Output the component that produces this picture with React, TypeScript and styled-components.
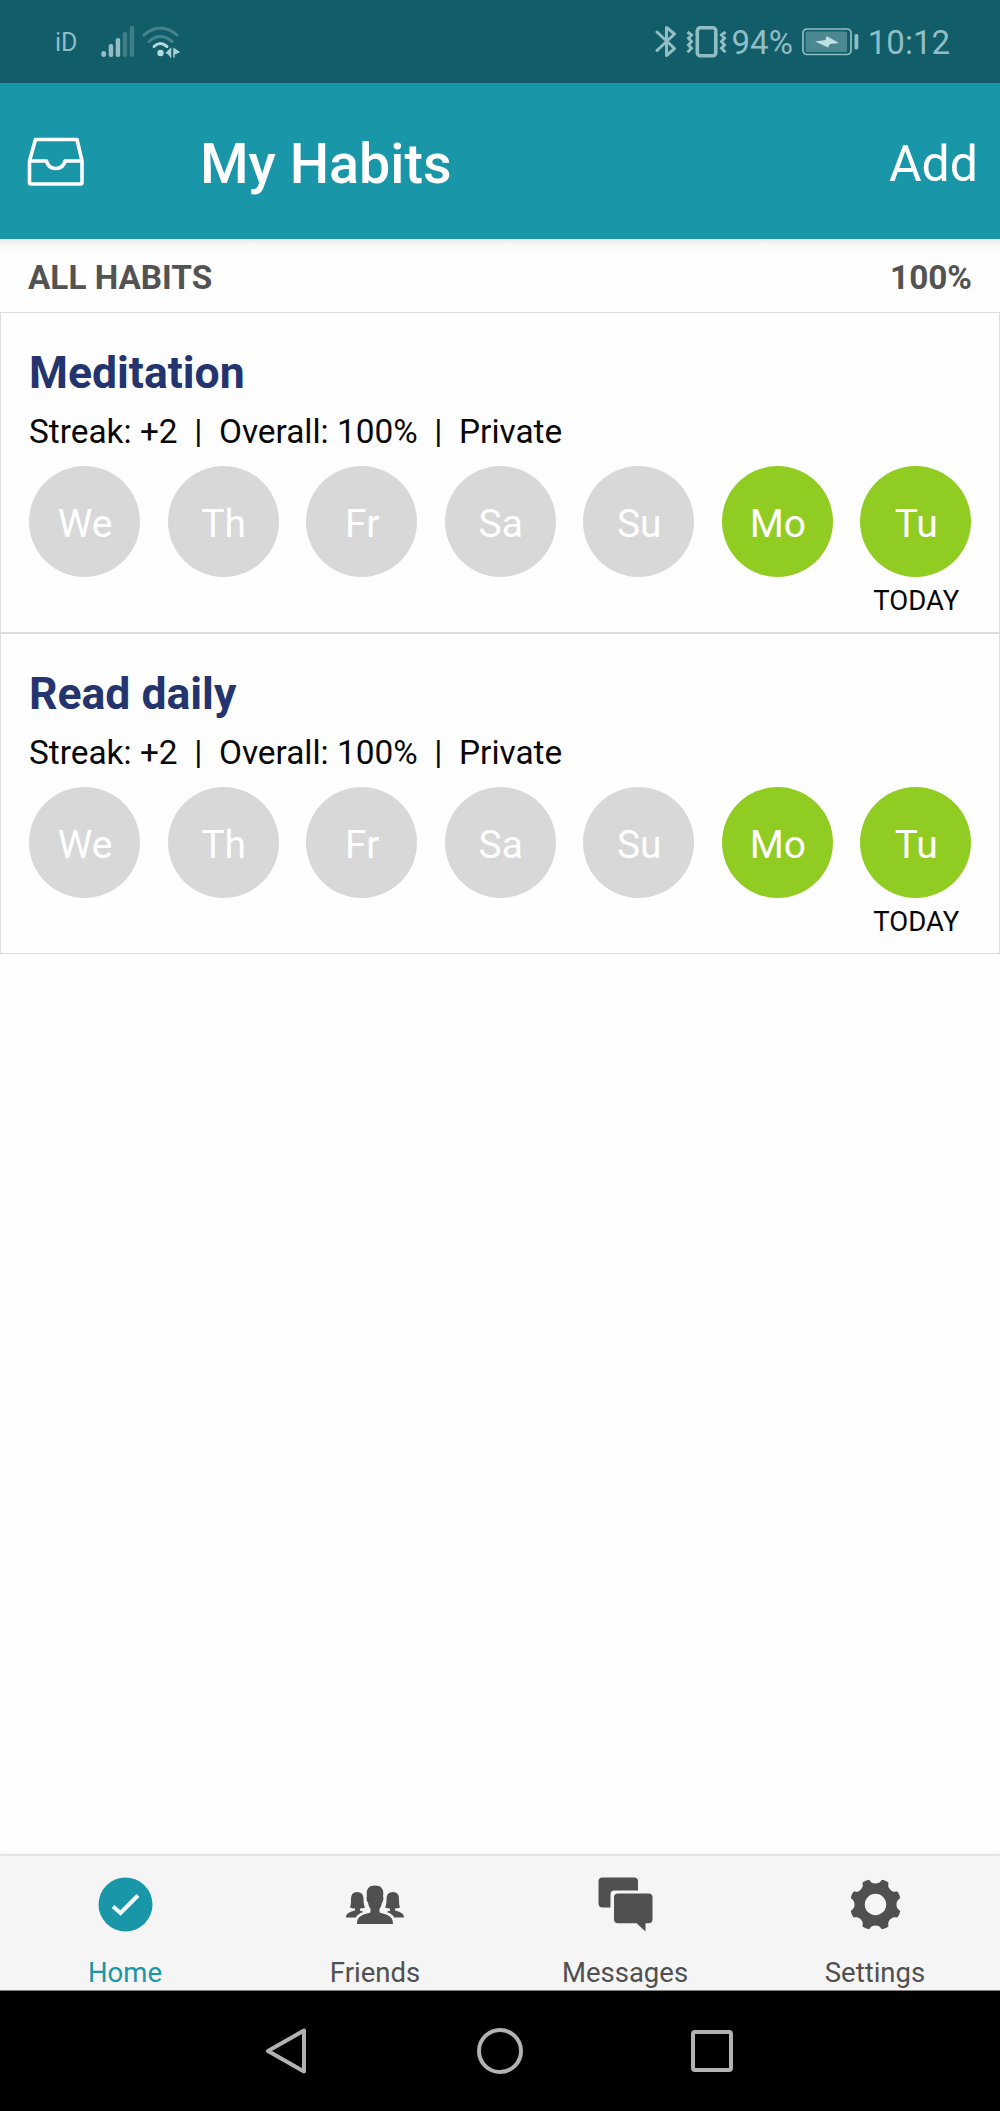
import React from 'react';
import styled, { createGlobalStyle } from 'styled-components';

const Global = createGlobalStyle`
  body { margin: 0; background: #fff; font-family: Roboto, sans-serif; }
  * { box-sizing: border-box; }
  svg { display: block; flex: none; }
`;

const Screen = styled.div`
  width: 1000px;
  height: 2111px;
  display: flex;
  flex-direction: column;
  background: #fefefe;
  overflow: hidden;
`;

const StatusBar = styled.div`
  height: 83px;
  flex: none;
  display: flex;
  justify-content: space-between;
  background: #115d69;
  color: #92bdc3;
  padding: 3px 50px 0 55px;
`;

const StatusGroup = styled.div`
  display: flex;
  align-items: center;
  svg { margin-bottom: 3px; }
`;

const StatusText = styled.span<{ $size: number; $left?: number }>`
  font-size: ${(p) => p.$size}px;
  line-height: 40px;
  margin-left: ${(p) => p.$left ?? 0}px;
  white-space: nowrap;
`;

const Header = styled.header`
  height: 156px;
  flex: none;
  display: flex;
  align-items: center;
  padding: 6px 22px 0 27px;
  background: #1a96a9;
  color: #fff;
`;

const Title = styled.h1`
  margin: 0 auto 0 115px;
  font-size: 55.6px;
  font-weight: 500;
  line-height: 66px;
`;

const InboxIcon = styled.svg`
  margin-bottom: 5px;
`;

const AddButton = styled.button`
  border: 0;
  padding: 0;
  background: none;
  color: inherit;
  font: 400 50px/60px Roboto, sans-serif;
`;

const Section = styled.div`
  height: 73px;
  flex: none;
  display: flex;
  justify-content: space-between;
  align-items: center;
  padding: 3px 28px 0;
  font-size: 33.3px;
  font-weight: 700;
  color: #535353;
  background: linear-gradient(#e8eaeb, #f8f8f8 6px, #fefefe 15px);
`;

const List = styled.main`
  flex: 1;
`;

const Card = styled.article`
  height: 321px;
  border: 1px solid #dcdcdc;
  padding: 34px 27.5px 0 28px;
`;

const HabitName = styled.h2`
  margin: 0 0 14px;
  font-size: 44.5px;
  font-weight: 700;
  line-height: 52px;
  color: #24346f;
`;

const Meta = styled.p`
  margin: 0 0 14.5px;
  font-size: 33.4px;
  line-height: 38px;
  color: #080808;
  white-space: pre;
`;

const Days = styled.div`
  display: flex;
  justify-content: space-between;
`;

const Day = styled.div`
  width: 111.4px;
  display: flex;
  flex-direction: column;
  align-items: center;
`;

const Dot = styled.div<{ $done: boolean }>`
  width: 111.4px;
  height: 111.4px;
  border-radius: 50%;
  padding: 5px 0 0 1px;
  display: flex;
  align-items: center;
  justify-content: center;
  font-size: 39px;
  color: #fff;
  background: ${(p) => (p.$done ? '#91cc23' : '#d8d8d8')};
`;

const Today = styled.span`
  margin-top: 8px;
  padding-left: 1px;
  font-size: 27.5px;
  line-height: 32px;
  color: #080808;
`;

const TabBar = styled.nav`
  height: 137px;
  flex: none;
  display: grid;
  grid-template-columns: repeat(4, 1fr);
  border-top: 2px solid #e5e5e5;
  border-bottom: 1px solid #808080;
  background: #f5f5f5;
  box-shadow: 0 -1px 3px rgba(0, 0, 0, 0.05);
`;

const Tab = styled.div<{ $active?: boolean }>`
  display: flex;
  flex-direction: column;
  align-items: center;
  padding-top: 21px;
  font-size: 27.5px;
  line-height: 32px;
  color: ${(p) => (p.$active ? '#1a96a9' : '#505050')};
  svg { margin-bottom: 25px; }
`;

const NavBar = styled.div`
  height: 120px;
  flex: none;
  display: flex;
  justify-content: center;
  align-items: center;
  gap: 168px;
  padding-right: 4px;
  background: #000;
`;

const SignalIcon = () => (
  <svg width="34" height="32" viewBox="0 0 34 32" fill="currentColor">
    <ellipse cx="2.700" cy="28" rx="2.500" ry="3" />
    <rect x="7.700" y="18" width="4.500" height="13" rx="2" />
    <rect x="14.700" y="12" width="4.500" height="19" rx="2" />
    <rect x="21.700" y="6" width="4.500" height="25" rx="2" opacity=".35" />
    <rect x="28.700" y="0" width="4.500" height="31" rx="2" opacity=".35" />
  </svg>
);

const WifiIcon = () => (
  <svg width="38" height="32" viewBox="0 0 38 32" fill="none" stroke="currentColor" strokeWidth="3" strokeLinecap="round">
    <path d="M2 9 Q18 -5 35 9" opacity=".4" />
    <path d="M7 15.500 Q18 5.500 30 15.500" opacity=".4" />
    <path d="M12 20.500 Q18 14.500 25 20.500" stroke="#b5dbe0" />
    <circle cx="18.500" cy="27" r="3.200" fill="#b5dbe0" stroke="none" />
    <path d="M24.500 27L28.500 23V31M32 31V23L36.500 26L32 28" fill="#a9d2d7" stroke="#a9d2d7" strokeWidth="1.500" />
  </svg>
);

const BluetoothIcon = () => (
  <svg width="22" height="33" viewBox="0 0 22 33" fill="none" stroke="currentColor" strokeWidth="3" strokeLinejoin="round" strokeLinecap="round">
    <path d="M2 7 L19.500 23.500 L11.500 30.500 V2.500 L19.500 9 L2 25.500" />
  </svg>
);

const VibrateIcon = () => (
  <svg width="41" height="32" viewBox="0 0 41 32" fill="none" stroke="currentColor">
    <rect x="11.300" y="1.800" width="18.500" height="28" rx="3" strokeWidth="3.600" />
    <path d="M1.500 6l4 3-3 3.300 3 3.300-3 3.300 3 3.300-4 4M39.500 6l-4 3 3 3.300-3 3.300 3 3.300-3 3.300 4 4" strokeWidth="3" />
  </svg>
);

const BatteryIcon = () => (
  <svg width="57" height="28" viewBox="0 0 57 28">
    <rect x="1" y="1" width="48" height="25.500" rx="4" fill="none" stroke="currentColor" strokeWidth="1.700" />
    <rect x="3.500" y="3.500" width="41.500" height="20.500" rx="1.500" fill="#4c8891" />
    <path d="M13 13.500 L23.500 12 L24.500 8 L37 15 L28 16 L26 19.500Z" fill="#bfe0e4" />
    <rect x="52.500" y="6" width="3.800" height="15.500" rx="1.500" fill="currentColor" />
  </svg>
);

const HomeIcon = () => (
  <svg width="55" height="55" viewBox="0 0 55 55">
    <circle cx="27.500" cy="27.500" r="27" fill="#1a96a9" />
    <path d="M15 29.500 L22.500 36 L40 18.500" fill="none" stroke="#f4ffff" strokeWidth="4" />
  </svg>
);

const FriendsIcon = () => (
  <svg width="60" height="55" viewBox="0 0 60 55" fill="currentColor">
    <path d="M1 40.500C1 36 5 35 10 33.500V31.500Q7 31.500 5 30.500Q6 28 6 22Q6 15 12 15Q18.500 15 18.500 22Q18.500 28 20 30.500Q18 31.500 15 31.500V33.500L18.500 35Q12 37 11 40.500Z" />
    <path d="M59 40.500C59 36 55 35 50 33.500V31.500Q53 31.500 55 30.500Q54 28 54 22Q54 15 48 15Q41.500 15 41.500 22Q41.500 28 40 30.500Q42 31.500 45 31.500V33.500L41.500 35Q48 37 49 40.500Z" />
    <path d="M12 47C12 39.500 16 38 25.500 35.500V32Q23.500 29.500 23 25.500Q21.500 24 21.500 20.500L22 19.500C20.500 11.500 24.500 8.500 30 8.500S39.500 11.500 38 19.500L38.500 20.500Q38.500 24 37 25.500Q36.500 29.500 34.500 32V35.500C44 38 48 39.500 48 47Z" />
  </svg>
);

const MessagesIcon = () => (
  <svg width="55" height="55" viewBox="0 0 55 55" fill="currentColor">
    <path d="M4.500 .5H36Q40 .5 40 4.500V13.500H16.500Q12.500 13.500 12.500 17.500V30.500H4.500Q.5 30.500 .5 26.500V4.500Q.5 .5 4.500 .5Z" />
    <path d="M20 16.500H50.500Q54.500 16.500 54.500 20.500V42Q54.500 46.300 50.500 46.300H47.500V54.500L38.500 46.300H20Q16 46.300 16 42V20.500Q16 16.500 20 16.500Z" />
  </svg>
);

const gearNotches = Array.from({ length: 8 }, (_, i) => i * 45);
const SettingsIcon = () => (
  <svg width="55" height="55" viewBox="0 0 55 55">
    <circle cx="27.500" cy="27.500" r="25.700" fill="currentColor" />
    {gearNotches.map((angle) => (
      <path key={angle} transform={`rotate(${angle} 27.500 27.500)`} d="M20.700 0 V2.500 C22.500 3.500 22.500 6.500 27.500 6.500 S32.500 3.500 34.300 2.500 V0Z" fill="#f5f5f5" />
    ))}
    <circle cx="27.500" cy="27.500" r="10.700" fill="#f5f5f5" />
  </svg>
);

const week = ['We', 'Th', 'Fr', 'Sa', 'Su', 'Mo', 'Tu'];

const Habit = ({ name }: { name: string }) => (
  <Card>
    <HabitName>{name}</HabitName>
    <Meta>{'Streak: +2  |  Overall: 100%  |  Private'}</Meta>
    <Days>
      {week.map((day, i) => (
        <Day key={day}>
          <Dot $done={i > 4}>{day}</Dot>
          {i === 6 && <Today>TODAY</Today>}
        </Day>
      ))}
    </Days>
  </Card>
);

const Gap = styled.span<{ $w: number }>`
  width: ${(p) => p.$w}px;
`;

export default function App() {
  return (
    <Screen>
      <Global />
      <StatusBar>
        <StatusGroup>
          <StatusText $size={25}>iD</StatusText>
          <Gap $w={23} />
          <SignalIcon />
          <Gap $w={7} />
          <WifiIcon />
        </StatusGroup>
        <StatusGroup>
          <BluetoothIcon />
          <Gap $w={9} />
          <VibrateIcon />
          <StatusText $size={33} $left={5}>94%</StatusText>
          <Gap $w={9} />
          <BatteryIcon />
          <StatusText $size={33} $left={9}>10:12</StatusText>
        </StatusGroup>
      </StatusBar>
      <Header>
        <InboxIcon width="58" height="50" viewBox="0 0 58 50" fill="none" stroke="#fff" strokeWidth="3.600" strokeLinejoin="round">
          <path d="M8.500 2.500H50L55 24V45.500Q55 47 53.500 47H4Q2.500 47 2.500 45.500V24ZM2.500 24H19.500C20.500 28.500 23.500 31.500 28.700 31.500S37 28.500 38 24H55" />
        </InboxIcon>
        <Title>My Habits</Title>
        <AddButton>Add</AddButton>
      </Header>
      <Section>
        <span>ALL HABITS</span>
        <span>100%</span>
      </Section>
      <List>
        <Habit name="Meditation" />
        <Habit name="Read daily" />
      </List>
      <TabBar>
        <Tab $active><HomeIcon />Home</Tab>
        <Tab><FriendsIcon />Friends</Tab>
        <Tab><MessagesIcon />Messages</Tab>
        <Tab><SettingsIcon />Settings</Tab>
      </TabBar>
      <NavBar>
        <svg width="46" height="50" viewBox="0 0 46 50" fill="none" stroke="#b2b2b2" strokeWidth="4" strokeLinejoin="round">
          <path d="M5 25 L41 4.500 V45.500Z" />
        </svg>
        <svg width="46" height="46" viewBox="0 0 46 46" fill="none" stroke="#b2b2b2" strokeWidth="4">
          <circle cx="23" cy="23" r="21" />
        </svg>
        <svg width="42" height="42" viewBox="0 0 42 42" fill="none" stroke="#b2b2b2" strokeWidth="4">
          <rect x="2" y="2" width="38" height="38" rx="2" />
        </svg>
      </NavBar>
    </Screen>
  );
}
